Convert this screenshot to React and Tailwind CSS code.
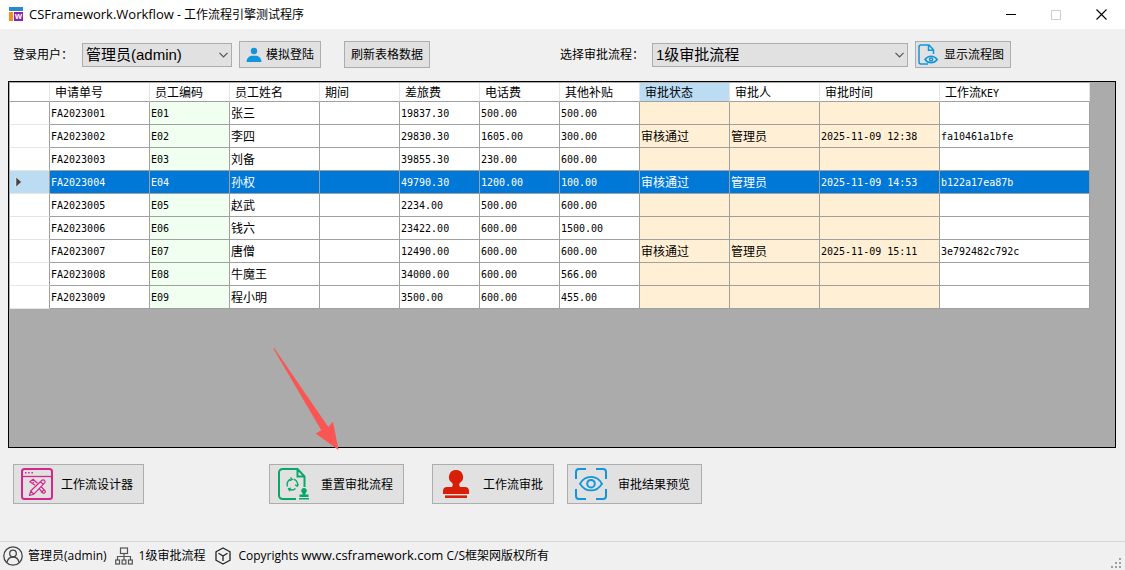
import React, { useState } from 'react';

const columns = [
    { key: 'no', label: '申请单号', col: 'w-[100px]', cell: '' },
    { key: 'code', label: '员工编码', col: 'w-[80px]', cell: 'bg-[#f0fff0]' },
    { key: 'name', label: '员工姓名', col: 'w-[90px]', cell: 'text-xs' },
    { key: 'period', label: '期间', col: 'w-[80px]', cell: '' },
    { key: 'travel', label: '差旅费', col: 'w-[80px]', cell: '' },
    { key: 'phone', label: '电话费', col: 'w-[80px]', cell: '' },
    { key: 'other', label: '其他补贴', col: 'w-[80px]', cell: '' },
    { key: 'status', label: '审批状态', col: 'w-[90px]', cell: 'bg-[#ffefd5] text-xs', active: true },
    { key: 'approver', label: '审批人', col: 'w-[90px]', cell: 'bg-[#ffefd5] text-xs' },
    { key: 'time', label: '审批时间', col: 'w-[120px]', cell: 'bg-[#ffefd5]' },
    { key: 'flowKey', label: '工作流', suffix: 'KEY', col: 'w-[150px]', cell: '' },
];

const rows = [
    { no: 'FA2023001', code: 'E01', name: '张三', travel: '19837.30', phone: '500.00', other: '500.00' },
    { no: 'FA2023002', code: 'E02', name: '李四', travel: '29830.30', phone: '1605.00', other: '300.00', status: '审核通过', approver: '管理员', time: '2025-11-09 12:38', flowKey: 'fa10461a1bfe' },
    { no: 'FA2023003', code: 'E03', name: '刘备', travel: '39855.30', phone: '230.00', other: '600.00' },
    { no: 'FA2023004', code: 'E04', name: '孙权', travel: '49790.30', phone: '1200.00', other: '100.00', status: '审核通过', approver: '管理员', time: '2025-11-09 14:53', flowKey: 'b122a17ea87b' },
    { no: 'FA2023005', code: 'E05', name: '赵武', travel: '2234.00', phone: '500.00', other: '600.00' },
    { no: 'FA2023006', code: 'E06', name: '钱六', travel: '23422.00', phone: '600.00', other: '1500.00' },
    { no: 'FA2023007', code: 'E07', name: '唐僧', travel: '12490.00', phone: '600.00', other: '600.00', status: '审核通过', approver: '管理员', time: '2025-11-09 15:11', flowKey: '3e792482c792c' },
    { no: 'FA2023008', code: 'E08', name: '牛魔王', travel: '34000.00', phone: '600.00', other: '566.00' },
    { no: 'FA2023009', code: 'E09', name: '程小明', travel: '3500.00', phone: '600.00', other: '455.00' },
];

const AppIcon = () => (
    <svg width="15" height="15" viewBox="0 0 15 15" aria-hidden="true">
        <rect x="0" y="0" width="14" height="4" fill="#2b88c8" />
        <rect x="0" y="5" width="4" height="9" fill="#ff8c1a" />
        <rect x="5" y="5" width="9" height="9" fill="#8e24aa" />
        <text x="9.500" y="12" textAnchor="middle" fontSize="9" fontWeight="700" fontFamily="Liberation Sans, sans-serif" fill="#fff">w</text>
    </svg>
);

const UserIcon = () => (
    <svg width="16" height="16" viewBox="0 0 16 16" fill="#1296db" aria-hidden="true">
        <circle cx="8" cy="4" r="3.2" />
        <path d="M.5 15c0-3.600 2.800-6.200 5.500-6.200h4c2.700 0 5.500 2.600 5.500 6.200z" />
    </svg>
);

const FileEyeIcon = () => (
    <svg width="20" height="22" viewBox="0 0 20 22" fill="none" stroke="#1296db" strokeWidth="1.500" aria-hidden="true">
        <path d="M10 20H3a2 2 0 0 1-2-2V3a2 2 0 0 1 2-2h8l4.500 4.800V10M10.500 1v5.300h5" />
        <path d="M7 15.500c3-4.300 9.200-4.300 12.200 0-3 4.300-9.200 4.300-12.200 0z" />
        <circle cx="13.100" cy="15.500" r="1.500" />
    </svg>
);

const DesignerIcon = () => (
    <svg width="32" height="32" viewBox="0 0 32 32" fill="none" stroke="#d6258c" aria-hidden="true">
        <rect x="1" y="1" width="30" height="30" rx="2.500" strokeWidth="2" />
        <path d="M1 8.500h30" strokeWidth="1.300" />
        <path d="M4 4.800h1.500M7.200 4.800h1.500M10.400 4.800h1.500" strokeWidth="1.500" />
        <path d="M8.500 27.500l1.200-4.500L21 12.300c1.700-1.400 4 .8 2.700 2.500L12.800 26.200zM9.700 23l3.100 3.200M19.500 13.800l2.900 2.800" strokeWidth="1.200" strokeLinejoin="round" />
        <path d="M14.200 17.200l-5.400-3.400 3.300-2.500 4.400 4M11.500 15.500l1.500-1.400M18 20.500l3.700 4.300c1 1.200 3.500-.7 2.400-2L20 18.500M20 24.500l3.500-3" strokeWidth="1.200" strokeLinejoin="round" />
    </svg>
);

const ResetIcon = () => (
    <svg width="32" height="32" viewBox="0 0 32 32" aria-hidden="true">
        <g fill="none" stroke="#0aa868">
            <path d="M18 31H4.500A3.500 3.500 0 0 1 1 27.500v-23A3.500 3.500 0 0 1 4.500 1h15l7 7.500V19M19.500 1.500v7h6.500" strokeWidth="2" />
            <path d="M9.500 18.500a5.300 5.300 0 0 1 3.200-7.200M15.700 11.200a5.300 5.300 0 0 1 3.700 6.300M17.500 20.500a5.300 5.300 0 0 1-6.500.4" strokeWidth="1.500" />
            <path d="M12.500 9.300l1.800 2-2.300 1.500M20.500 16l-1.300 2.300-2.200-1.500M11.800 23.200l-1.300-2.500 2.500-.7" strokeWidth="1.200" />
        </g>
        <path d="M26 20a2.800 2.800 0 0 1 1.500 5.200v1.300h3V29h-9v-2.500h3v-1.300A2.800 2.800 0 0 1 26 20zM21 30h10v1.500H21z" fill="#0aa868" />
    </svg>
);

const StampIcon = () => (
    <svg width="26" height="28" viewBox="0 0 26 28" fill="#d81e06" aria-hidden="true">
        <path d="M13 0a7 7 0 0 1 3.800 12.900c-.9.7-.8 4.100.7 4.100H22c2.500 0 4 1.500 4 4v3H0v-3c0-2.500 1.500-4 4-4h4.500c1.500 0 1.600-3.400.7-4.100A7 7 0 0 1 13 0z" />
        <rect x="2" y="25.400" width="22" height="2.600" />
    </svg>
);

const PreviewIcon = () => (
    <svg width="32" height="32" viewBox="0 0 32 32" fill="none" stroke="#1296db" strokeWidth="2" aria-hidden="true">
        <path d="M1 11V4a3 3 0 0 1 3-3h7M21 1h7a3 3 0 0 1 3 3v7M31 21v7a3 3 0 0 1-3 3h-7M11 31H4a3 3 0 0 1-3-3v-7" />
        <path d="M5 15.700c5.500-9 16.500-9 22 0-5.500 9-16.500 9-22 0z" strokeWidth="1.800" />
        <circle cx="16" cy="15.700" r="3.800" strokeWidth="2" />
    </svg>
);

const AccountIcon = () => (
    <svg width="20" height="20" viewBox="0 0 20 20" fill="none" stroke="#444" strokeWidth="1.300" aria-hidden="true">
        <circle cx="10" cy="10" r="9.200" />
        <circle cx="10" cy="7.500" r="3.300" />
        <path d="M4 16.500c.6-3.300 3-5.500 6-5.500s5.400 2.200 6 5.500" />
    </svg>
);

const FlowIcon = () => (
    <svg width="18" height="18" viewBox="0 0 18 18" fill="none" stroke="#555" strokeWidth="1.200" aria-hidden="true">
        <rect x="5.500" y="1" width="7" height="5.500" />
        <path d="M9 6.500V13M2.500 13V9.500h13V13" />
        <rect x=".7" y="13" width="3.800" height="4" />
        <rect x="7.100" y="13" width="3.800" height="4" />
        <rect x="13.500" y="13" width="3.800" height="4" />
    </svg>
);

const CubeIcon = () => (
    <svg width="16" height="18" viewBox="0 0 16 18" fill="none" stroke="#222" strokeWidth="1.300" strokeLinejoin="round" aria-hidden="true">
        <path d="M8 1l7 3.800v8.400L8 17l-7-3.800V4.800zM3.500 6.200L8 9l4.500-2.800M8 9v5" />
    </svg>
);

const Arrow = () => (
    <svg width="66" height="102" viewBox="0 0 66 102" className="pointer-events-none absolute bottom-full left-1 mb-3.5" aria-hidden="true">
        <path d="M0 0l1.500.5L55.300 79l4.700-5.200L65.500 102 42.700 85.500l5.600-3.300z" fill="#fb5553" />
    </svg>
);

const ToolButton = ({ icon, children, className }) => (
    <button type="button" className={`flex shrink-0 items-center border border-[#adadad] bg-[#e1e1e1] whitespace-nowrap hover:border-[#0078d7] hover:bg-[#e5f1fb] ${className}`}>
        {icon}
        <span className="pt-px">{children}</span>
    </button>
);

const ComboBox = ({ id, options, className }) => (
    <div className={`relative shrink-0 ${className}`}>
        <select id={id} className="block h-6 w-full appearance-none border border-[#adadad] bg-[#e1e1e1] pr-5 pl-[3px] text-[15px] leading-5">
            {options.map(option => (
                <option key={option}>{option}</option>
            ))}
        </select>
        <svg width="9" height="6" viewBox="0 0 9 6" className="pointer-events-none absolute top-[9px] right-1" fill="none" stroke="#555" strokeWidth="1.200" aria-hidden="true">
            <path d="M.5.8l4 4 4-4" />
        </svg>
    </div>
);

const TitleBar = () => (
    <header className="flex h-[29px] items-center bg-white pl-[9px] font-['Open_Sans','Noto_Sans_CJK_SC',sans-serif]">
        <AppIcon />
        <h1 className="ml-[5px] flex-1 text-xs"><span className="text-[13px]">CSFramework.Workflow</span> - 工作流程引擎测试程序</h1>
        <button type="button" aria-label="最小化" className="flex h-full w-[45px] items-center justify-center">
            <svg width="10" height="10" viewBox="0 0 10 10" stroke="#000"><path d="M0 4.500h10" /></svg>
        </button>
        <button type="button" aria-label="最大化" disabled className="flex h-full w-[45px] items-center justify-center">
            <svg width="10" height="10" viewBox="0 0 10 10" fill="none" stroke="#ccc"><path d="M.5.5h9v9h-9z" /></svg>
        </button>
        <button type="button" aria-label="关闭" className="flex h-full w-[47px] items-center justify-center">
            <svg width="11" height="11" viewBox="0 0 11 11" stroke="#000" strokeWidth="1.100"><path d="M.5.5l10 10M10.500.5l-10 10" /></svg>
        </button>
    </header>
);

const Toolbar = () => (
    <div className="flex h-[52px] items-center pb-px pl-[13px]">
        <label htmlFor="user" className="w-[69px] shrink-0">登录用户：</label>
        <ComboBox id="user" options={['管理员(admin)']} className="w-[150px]" />
        <ToolButton icon={<UserIcon />} className="ml-[7px] h-[27px] w-[82px] gap-1 pl-1.5">模拟登陆</ToolButton>
        <ToolButton className="ml-[23px] h-[27px] w-[86px] justify-center">刷新表格数据</ToolButton>
        <label htmlFor="flow" className="ml-[130px] w-[92px] shrink-0">选择审批流程：</label>
        <ComboBox id="flow" options={['1级审批流程']} className="w-[256px]" />
        <ToolButton icon={<FileEyeIcon />} className="ml-[7px] h-[27px] w-[96px] gap-1.5 pl-0.5">显示流程图</ToolButton>
    </div>
);

const DataGrid = () => {
    const [selected, setSelected] = useState('FA2023004');

    return (
        <main className="mr-[9px] ml-2 flex-1 overflow-auto border border-black bg-[#ababab] p-px">
            <table className="w-[1080px] table-fixed border-separate border-spacing-0 bg-white text-left">
                <colgroup>
                    <col className="w-[40px]" />
                    {columns.map(c => <col key={c.key} className={c.col} />)}
                </colgroup>
                <thead>
                    <tr className="h-[19px]">
                        <td className="border-r border-b border-[#a0a0a0] border-r-[#e5e5e5] p-0" />
                        {columns.map(c => (
                            <th key={c.key} className={`border-r border-b border-[#a0a0a0] border-r-[#e5e5e5] pt-0.5 pr-0 pb-0 pl-[5px] leading-4 font-normal whitespace-nowrap ${c.active ? 'bg-[#bcdcf4]' : ''}`}>
                                {c.label}
                                {c.suffix && <span className="font-['DejaVu_Sans_Mono',monospace] text-[10px] leading-none">{c.suffix}</span>}
                            </th>
                        ))}
                    </tr>
                </thead>
                <tbody className="font-['DejaVu_Sans_Mono','Noto_Sans_CJK_SC',monospace] text-[10px]">
                    {rows.map(row => {
                        const isSelected = row.no === selected;
                        return (
                            <tr key={row.no} onClick={() => setSelected(row.no)} className="h-[23px]">
                                <td className={`border-r border-b border-[#e5e5e5] border-r-[#a0a0a0] p-0 ${isSelected ? 'bg-[#bcdcf4]' : ''}`}>
                                    {isSelected && (
                                        <svg width="7" height="12" viewBox="0 0 7 12" className="ml-[5px]" aria-hidden="true">
                                            <path d="M1 1v10L6.500 6z" fill="#444" stroke="#fff" strokeWidth=".5" />
                                        </svg>
                                    )}
                                </td>
                                {columns.map(c => (
                                    <td key={c.key} className={`border-r border-b border-[#a0a0a0] pt-0.5 pr-0 pb-0 pl-px leading-5 whitespace-nowrap ${c.cell} ${isSelected ? 'bg-[#0078d7]! text-white' : ''}`}>
                                        {row[c.key]}
                                    </td>
                                ))}
                            </tr>
                        );
                    })}
                </tbody>
            </table>
        </main>
    );
};

const ActionBar = () => (
    <div className="flex h-[93px] items-start pt-4 pl-[13px]">
        <ToolButton icon={<DesignerIcon />} className="h-10 w-[131px] gap-2 pl-[7px]">工作流设计器</ToolButton>
        <div className="relative ml-[125px]">
            <Arrow />
            <ToolButton icon={<ResetIcon />} className="h-10 w-[135px] gap-[11px] pl-2">重置审批流程</ToolButton>
        </div>
        <ToolButton icon={<StampIcon />} className="ml-7 h-10 w-[122px] gap-[14px] pl-2.5">工作流审批</ToolButton>
        <ToolButton icon={<PreviewIcon />} className="ml-[13px] h-10 w-[135px] gap-[11px] pl-[7px]">审批结果预览</ToolButton>
    </div>
);

const StatusBar = () => (
    <footer className="flex h-[29px] items-center border-t border-[#d7d7d7] pl-[3px] font-['Open_Sans','Noto_Sans_CJK_SC',sans-serif]">
        <AccountIcon />
        <span className="ml-[5px]">管理员(admin)</span>
        <span className="ml-2"><FlowIcon /></span>
        <span className="ml-1.5">1级审批流程</span>
        <span className="ml-2.5"><CubeIcon /></span>
        <span className="ml-[7px] flex-1">Copyrights <span className="text-[13px]">www.csframework.com</span> C/S框架网版权所有</span>
        <svg width="12" height="12" viewBox="0 0 12 12" fill="#a0a0a0" className="mr-0.5 self-end" aria-hidden="true">
            <path d="M8 0h2v2H8zM4 4h2v2H4zM8 4h2v2H8zM0 8h2v2H0zM4 8h2v2H4zM8 8h2v2H8z" />
        </svg>
    </footer>
);

const App = () => (
    <div className="flex min-h-screen flex-col bg-[#f0f0f0] font-['Liberation_Sans','Noto_Sans_CJK_SC',sans-serif] text-xs text-black">
        <TitleBar />
        <Toolbar />
        <DataGrid />
        <ActionBar />
        <StatusBar />
    </div>
);

export default App;
